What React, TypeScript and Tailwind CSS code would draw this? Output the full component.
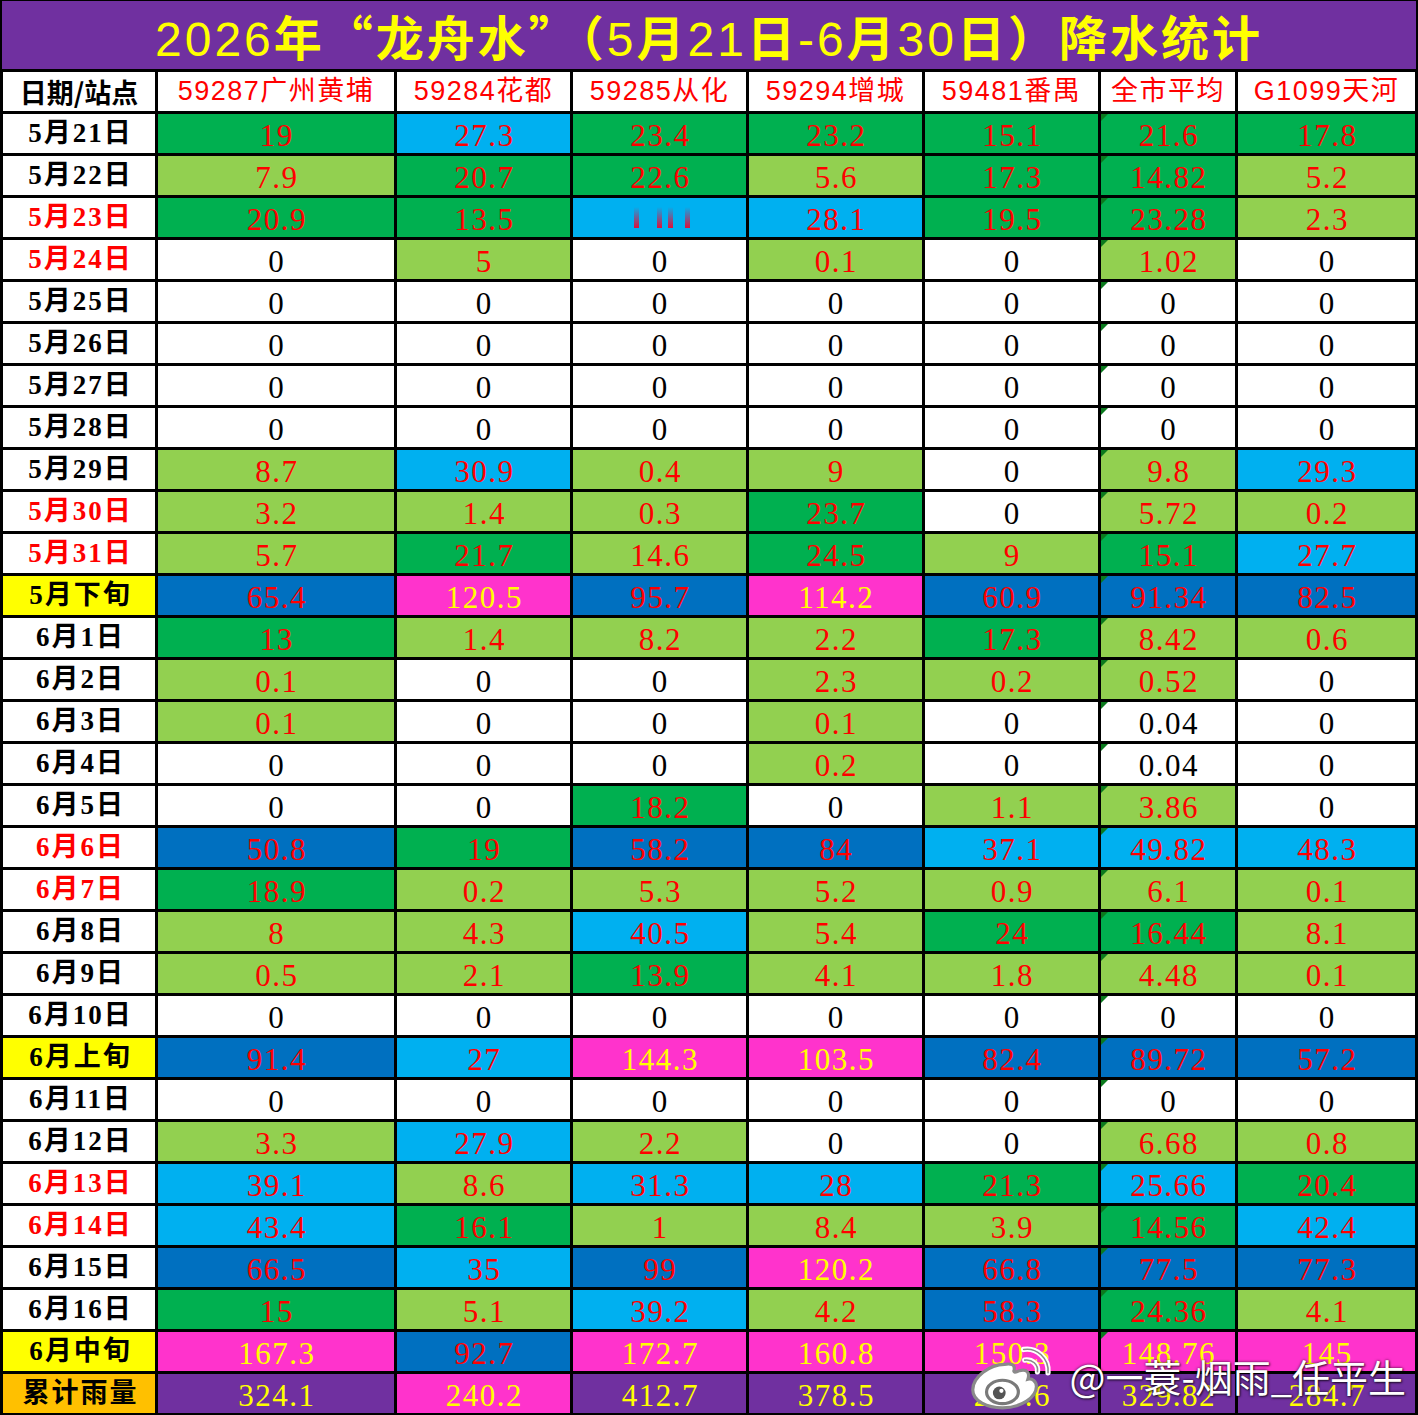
import React from "react";

type Kind = "day" | "sum" | "total";

interface Row {
  date: string;
  red?: boolean;
  kind?: Kind;
  cells: string;
}

const STATIONS = [
  "59287广州黄埔",
  "59284花都",
  "59285从化",
  "59294增城",
  "59481番禺",
  "全市平均",
  "G1099天河",
];

const BG: Record<string, string> = {
  W: "bg-white",
  L: "bg-[#92d050]",
  G: "bg-[#00b050]",
  C: "bg-[#00b0f0]",
  B: "bg-[#0070c0]",
  M: "bg-[#ff33cc]",
  P: "bg-[#7030a0]",
};

const ZERO = "0:W 0:W 0:W 0:W 0:W 0:W 0:W";

const ROWS: Row[] = [
  { date: "5月21日", cells: "19:G 27.3:C 23.4:G 23.2:G 15.1:G 21.6:G 17.8:G" },
  { date: "5月22日", cells: "7.9:L 20.7:G 22.6:G 5.6:L 17.3:G 14.82:G 5.2:L" },
  { date: "5月23日", red: true, cells: "20.9:G 13.5:G ~:C 28.1:C 19.5:G 23.28:G 2.3:L" },
  { date: "5月24日", red: true, cells: "0:W 5:L 0:W 0.1:L 0:W 1.02:L 0:W" },
  { date: "5月25日", cells: ZERO },
  { date: "5月26日", cells: ZERO },
  { date: "5月27日", cells: ZERO },
  { date: "5月28日", cells: ZERO },
  { date: "5月29日", cells: "8.7:L 30.9:C 0.4:L 9:L 0:W 9.8:L 29.3:C" },
  { date: "5月30日", red: true, cells: "3.2:L 1.4:L 0.3:L 23.7:G 0:W 5.72:L 0.2:L" },
  { date: "5月31日", red: true, cells: "5.7:L 21.7:G 14.6:L 24.5:G 9:L 15.1:G 27.7:C" },
  { date: "5月下旬", kind: "sum", cells: "65.4:B 120.5:M 95.7:B 114.2:M 60.9:B 91.34:B 82.5:B" },
  { date: "6月1日", cells: "13:G 1.4:L 8.2:L 2.2:L 17.3:G 8.42:L 0.6:L" },
  { date: "6月2日", cells: "0.1:L 0:W 0:W 2.3:L 0.2:L 0.52:L 0:W" },
  { date: "6月3日", cells: "0.1:L 0:W 0:W 0.1:L 0:W 0.04:W 0:W" },
  { date: "6月4日", cells: "0:W 0:W 0:W 0.2:L 0:W 0.04:W 0:W" },
  { date: "6月5日", cells: "0:W 0:W 18.2:G 0:W 1.1:L 3.86:L 0:W" },
  { date: "6月6日", red: true, cells: "50.8:B 19:G 58.2:B 84:B 37.1:C 49.82:C 48.3:C" },
  { date: "6月7日", red: true, cells: "18.9:G 0.2:L 5.3:L 5.2:L 0.9:L 6.1:L 0.1:L" },
  { date: "6月8日", cells: "8:L 4.3:L 40.5:C 5.4:L 24:G 16.44:G 8.1:L" },
  { date: "6月9日", cells: "0.5:L 2.1:L 13.9:G 4.1:L 1.8:L 4.48:L 0.1:L" },
  { date: "6月10日", cells: ZERO },
  { date: "6月上旬", kind: "sum", cells: "91.4:B 27:C 144.3:M 103.5:M 82.4:B 89.72:B 57.2:B" },
  { date: "6月11日", cells: ZERO },
  { date: "6月12日", cells: "3.3:L 27.9:C 2.2:L 0:W 0:W 6.68:L 0.8:L" },
  { date: "6月13日", red: true, cells: "39.1:C 8.6:L 31.3:C 28:C 21.3:G 25.66:C 20.4:G" },
  { date: "6月14日", red: true, cells: "43.4:C 16.1:G 1:L 8.4:L 3.9:L 14.56:G 42.4:C" },
  { date: "6月15日", cells: "66.5:B 35:C 99:B 120.2:M 66.8:B 77.5:B 77.3:B" },
  { date: "6月16日", cells: "15:G 5.1:L 39.2:C 4.2:L 58.3:B 24.36:G 4.1:L" },
  { date: "6月中旬", kind: "sum", cells: "167.3:M 92.7:B 172.7:M 160.8:M 150.3:M 148.76:M 145:M" },
  { date: "累计雨量", kind: "total", cells: "324.1:P 240.2:M 412.7:P 378.5:P 293.6:P 329.82:P 284.7:P" },
];

function textColor(bg: string) {
  if (bg === "M" || bg === "P") return "text-[#ffff00]";
  if (bg === "W") return "text-black";
  return "text-[#ff0000]";
}

// the broken cell in the source: four red streaks fading upward
function Glitch() {
  return (
    <div className="flex h-full items-center pl-[61px]">
      <span className="h-[21px] w-[5px] bg-gradient-to-t from-[#e0103a] to-transparent" />
      <span className="ml-[18px] h-[21px] w-[5px] bg-gradient-to-t from-[#e0103a] to-transparent" />
      <span className="ml-[6px] h-[21px] w-[5px] bg-gradient-to-t from-[#e0103a] to-transparent" />
      <span className="ml-[12px] h-[21px] w-[5px] bg-gradient-to-t from-[#e0103a] to-transparent" />
    </div>
  );
}

function DateCell({ row }: { row: Row }) {
  const bg =
    row.kind === "sum" ? "bg-[#ffff00]" : row.kind === "total" ? "bg-[#ffc000]" : "bg-white";
  const color = row.red ? "text-[#ff0000]" : "text-black";
  return (
    <div className={`flex items-center justify-center ${bg}`}>
      <span
        className={`pl-[3px] text-[27px] font-bold leading-none tracking-[2px] ${color} [font-family:'Liberation_Serif','Noto_Sans_CJK_SC',serif]`}
      >
        {row.date}
      </span>
    </div>
  );
}

function ValueCell({ value, bg, mark }: { value: string; bg: string; mark: boolean }) {
  return (
    <div className={`relative ${BG[bg]}`}>
      {mark ? (
        <span className="absolute left-0 top-0 h-0 w-0 border-r-[7px] border-t-[7px] border-r-transparent border-t-[#0b7a1e]" />
      ) : null}
      {value === "~" ? (
        <Glitch />
      ) : (
        <div className="flex h-full items-center justify-center pt-[3px]">
          <span
            className={`pl-[1.5px] text-[31px] leading-none tracking-[1.5px] ${textColor(bg)} [font-family:'Liberation_Serif',serif]`}
          >
            {value}
          </span>
        </div>
      )}
    </div>
  );
}

function WeiboMark() {
  return (
    <div className="pointer-events-none absolute bottom-[4px] right-[12px] flex items-center gap-[12px]">
      <svg width="92" height="70" viewBox="0 0 86 66" fill="none">
        <path
          d="M36 22C22 22 6 34 6 46C6 57 20 63 34 63C52 63 66 53 66 43C66 38 62 35 58 36C60 30 57 26 50 28C46 30 44 30 45 27C46 22 42 21 36 22Z"
          fill="#fff"
          stroke="#8a8a8a"
          strokeWidth="3"
        />
        <ellipse cx="34" cy="48" rx="15" ry="11" fill="#fff" stroke="#7a7a7a" strokeWidth="3" />
        <circle cx="31" cy="49" r="6" fill="#555" />
        <circle cx="33" cy="47" r="2" fill="#fff" />
        <path d="M54 8C66 6 78 16 77 30" stroke="#fff" strokeWidth="5" strokeLinecap="round" />
        <path d="M54 8C66 6 78 16 77 30" stroke="#8a8a8a" strokeWidth="1.5" strokeLinecap="round" />
        <path d="M55 18C62 17 68 22 67 29" stroke="#fff" strokeWidth="5" strokeLinecap="round" />
        <path d="M55 18C62 17 68 22 67 29" stroke="#8a8a8a" strokeWidth="1.5" strokeLinecap="round" />
      </svg>
      <span className="text-[38px] leading-none text-white [font-family:'Noto_Sans_CJK_SC',sans-serif] [text-shadow:0_0_3px_rgba(0,0,0,0.75),1px_1px_2px_rgba(0,0,0,0.6)]">
        @一蓑-烟雨_任平生
      </span>
    </div>
  );
}

export default function App() {
  return (
    <div className="relative h-[1415px] w-[1418px] overflow-hidden bg-black">
      <div className="mx-[2px] mt-[1px] flex h-[68px] items-center justify-center bg-[#7030a0] pt-[4px]">
        <h1 className="text-[48px] leading-none tracking-[3px] text-[#ffff00] [font-family:'Liberation_Sans','Noto_Sans_CJK_SC',sans-serif]">
          2026<span className="font-bold [font-family:'Noto_Sans_CJK_SC',sans-serif]">年“龙舟水”（</span>
          5<span className="font-bold [font-family:'Noto_Sans_CJK_SC',sans-serif]">月</span>21
          <span className="font-bold [font-family:'Noto_Sans_CJK_SC',sans-serif]">日</span>-6
          <span className="font-bold [font-family:'Noto_Sans_CJK_SC',sans-serif]">月</span>30
          <span className="font-bold [font-family:'Noto_Sans_CJK_SC',sans-serif]">日）降水统计</span>
        </h1>
      </div>

      <div className="grid auto-rows-[39px] grid-cols-[152px_236px_173px_173px_173px_173px_134px_1fr] gap-[3px] p-[3px] pb-[2px]">
        <div className="flex items-center justify-center bg-white">
          <span className="text-[27px] font-bold leading-none text-black [font-family:'Noto_Sans_CJK_SC',sans-serif]">
            日期/站点
          </span>
        </div>
        {STATIONS.map((s) => (
          <div key={s} className="flex items-center justify-center bg-white">
            <span className="text-[27px] leading-none tracking-[1.5px] text-[#ff0000] [font-family:'Liberation_Sans','Noto_Sans_CJK_SC',sans-serif]">
              {s}
            </span>
          </div>
        ))}

        {ROWS.map((row) => (
          <React.Fragment key={row.date}>
            <DateCell row={row} />
            {row.cells.split(" ").map((c, i) => {
              const [value, bg] = c.split(":");
              return (
                <ValueCell
                  key={i}
                  value={value}
                  bg={bg}
                  mark={i === 5 && row.kind !== "total"}
                />
              );
            })}
          </React.Fragment>
        ))}
      </div>

      <WeiboMark />
    </div>
  );
}
